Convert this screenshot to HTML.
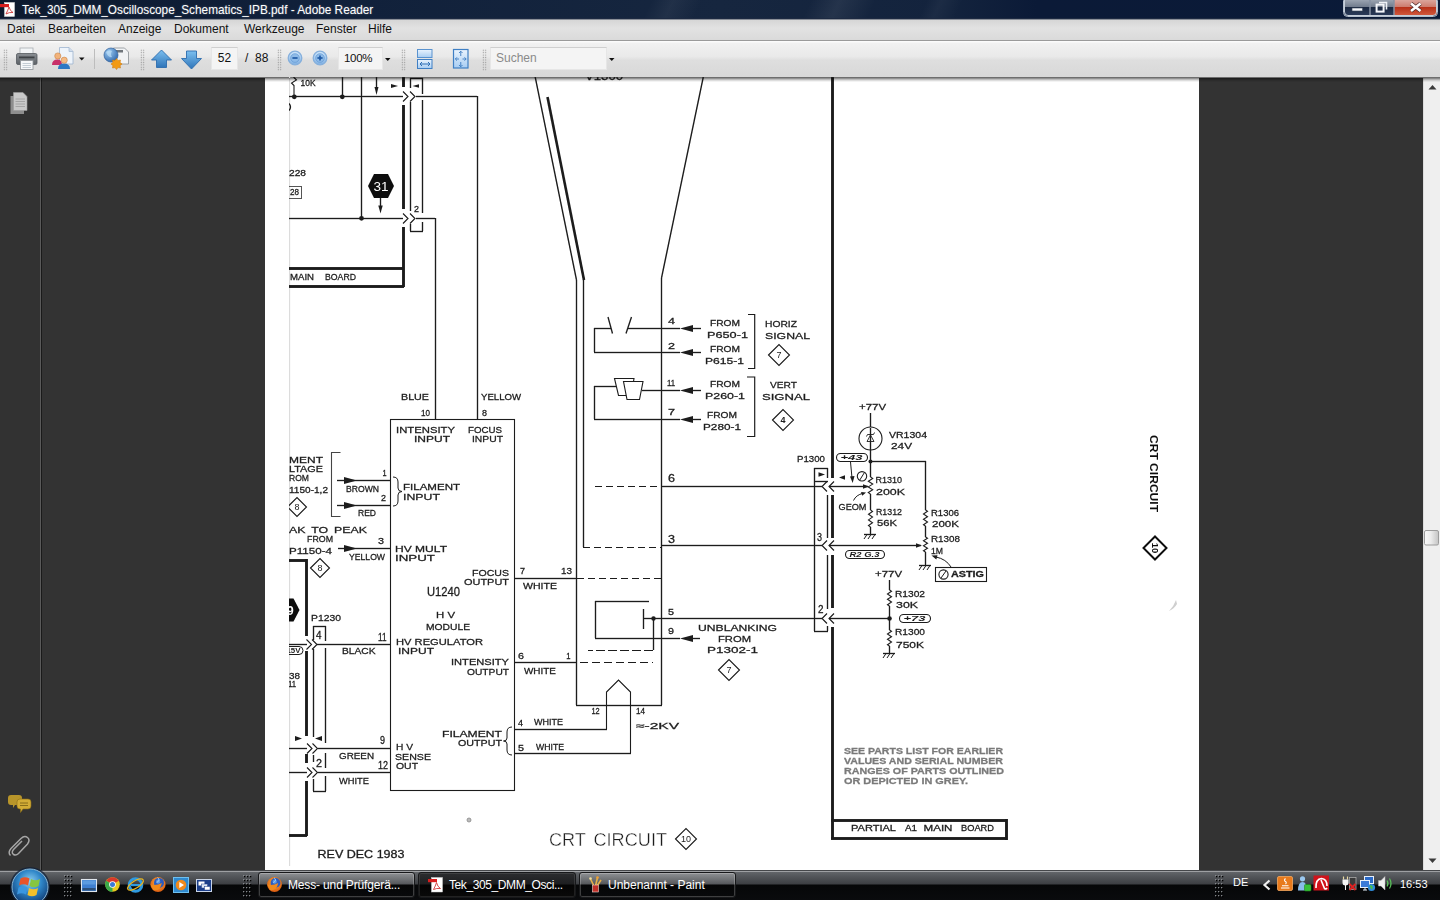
<!DOCTYPE html>
<html><head><meta charset="utf-8">
<style>
*{margin:0;padding:0;box-sizing:border-box}
html,body{width:1440px;height:900px;overflow:hidden;background:#333;font-family:"Liberation Sans",sans-serif}
.abs{position:absolute}
#title{left:0;top:0;width:1440px;height:19px;background:linear-gradient(115deg,transparent 45%,rgba(255,255,255,.05) 46.5%,transparent 48.5%,transparent 56%,rgba(255,255,255,.07) 58%,transparent 60.5%,transparent 64%,rgba(255,255,255,.04) 65%,transparent 66.5%),linear-gradient(90deg,#0d1a2e 0,#10203a 20%,#16263f 50%,#13233d 66%,#0b1a37 72%,#0a1a38 100%);border-bottom:1px solid #1d2a42}
#title .t{left:22px;top:1px;color:#fff;font-size:13px;line-height:17px;white-space:nowrap;transform-origin:0 0;transform:scaleX(0.907);text-shadow:0 0 2px rgba(255,255,255,.35)}
#menu{left:0;top:19px;width:1440px;height:22px;z-index:2;background:linear-gradient(#d6d6d6,#e2e2e2 40%,#dadada);border-top:1px solid #8a8f98;border-bottom:1px solid #9a9a9a}
#menu span{position:absolute;top:2px;font-size:12px;line-height:15px;color:#111;white-space:nowrap}
#tool{left:0;top:40px;width:1440px;height:38px;background:linear-gradient(#fbfbfb 0,#fbfbfb 2px,#f1f1f1 3px,#e9e9e9 45%,#dedede 55%,#d8d8d8);border-bottom:1px solid #6e6e6e}
#toolshadow{left:0;top:78px;width:1440px;height:4px;background:linear-gradient(rgba(0,0,0,.5),rgba(0,0,0,.18) 50%,rgba(0,0,0,0))}
.grip{width:5px;height:22px;top:9px;background-image:radial-gradient(circle,#8e8e8e 0.65px,transparent 0.85px);background-size:2.5px 2.45px}
.box{background:#f4f4f4;border:1px solid #e6e6e6;border-top-color:#cfcfcf;font-size:12px;line-height:21px;color:#111}
#side{left:0;top:78px;width:42px;height:792px;background:#323232;border-right:1px solid #1a1a1a;box-shadow:inset -1px 0 0 #5a5a5a}
#page{left:265px;top:78px;width:934px;height:792px;background:#fff}
#scroll{left:1423px;top:78px;width:17px;height:792px;background:#efefef;border-left:1px solid #dcdcdc}
#task{left:0;top:870px;width:1440px;height:30px;background:linear-gradient(#45474a 0,#45474a 1px,#9ea0a3 1px,#9ea0a3 2px,#626569 2px,#54575b 6px,#3d3f43 14px,#060708 15px,#0a0b0d 100%)}
.tb{top:2px;height:26px;border-radius:3px;border:1px solid #17181a;box-shadow:inset 0 0 0 1px rgba(255,255,255,.22);background:linear-gradient(rgba(255,255,255,.30),rgba(255,255,255,.13) 46%,rgba(0,0,0,.25) 50%,rgba(0,0,0,.05));color:#fff;font-size:12px;line-height:24px;white-space:nowrap;overflow:hidden}
.tb.act{background:linear-gradient(#2c2d2f,#1d1e20 46%,#040404 50%,#0a0a0a);box-shadow:inset 0 0 0 1px rgba(255,255,255,.10)}
svg{position:absolute;left:0;top:0;overflow:visible}
</style></head><body>
<!--TITLE-->
<div id="title" class="abs"><div class="t abs">Tek_305_DMM_Oscilloscope_Schematics_IPB.pdf - Adobe Reader</div></div>
<!--MENU-->
<div id="menu" class="abs">
<span style="left:7px">Datei</span><span style="left:48px">Bearbeiten</span><span style="left:118px">Anzeige</span><span style="left:174px">Dokument</span><span style="left:244px">Werkzeuge</span><span style="left:316px">Fenster</span><span style="left:368px">Hilfe</span>
</div>
<!--TOOL-->
<div id="tool" class="abs">
<div class="grip abs" style="left:3px"></div>
<div class="grip abs" style="left:140px"></div>
<div class="grip abs" style="left:277px"></div>
<div class="grip abs" style="left:401px"></div>
<div class="grip abs" style="left:482px"></div>
<div class="abs" style="left:94px;top:9px;width:1px;height:20px;background:#bdbdbd"></div>
<div class="box abs" style="left:211px;top:7px;width:27px;height:23px;text-align:center">52</div>
<div class="abs" style="left:245px;top:8px;font-size:12px;line-height:21px;color:#111;white-space:pre">/  88</div>
<div class="box abs" style="left:338px;top:7px;width:45px;height:23px;padding-left:5px;font-size:11.5px;letter-spacing:-0.3px">100%</div>
<div class="box abs" style="left:490px;top:7px;width:117px;height:23px;padding-left:5px;color:#8a8a8a">Suchen</div>
</div>
<!--SIDE-->
<div id="side" class="abs"></div>
<!--PAGE-->
<div id="page" class="abs"></div>
<div id="scroll" class="abs"></div>
<svg width="1440" height="900" viewBox="0 0 1440 900" font-family="Liberation Sans, sans-serif"><defs><filter id="soft" x="0" y="0" width="100%" height="100%" filterUnits="userSpaceOnUse"><feGaussianBlur stdDeviation="0.33"/></filter><clipPath id="pg"><rect x="289" y="77" width="910" height="790"/></clipPath></defs><g clip-path="url(#pg)" style="font-family:'Liberation Sans',sans-serif" opacity="0.999" filter="url(#soft)">
<rect x="288.84" y="77" width="1.32" height="789" fill="#dcdcdc"/>
<path d="M293.5 77 L296.5 80 L291.5 83 L294 85.5 L294 96" stroke="#1c1c1c" stroke-width="1.1" fill="none" stroke-linejoin="miter"/>
<text x="300.5" y="86.0" textLength="15.0" lengthAdjust="spacingAndGlyphs" font-size="9" fill="#1c1c1c" stroke="#1c1c1c" stroke-width="0.28">10K</text>
<circle cx="294.3" cy="96.8" r="2.4" fill="#1c1c1c"/>
<circle cx="342.3" cy="96.8" r="2.4" fill="#1c1c1c"/>
<rect x="341.84" y="77" width="1.32" height="20" fill="#1c1c1c"/>
<rect x="360.84" y="77" width="1.32" height="141" fill="#1c1c1c"/>
<circle cx="361.5" cy="218.3" r="2.4" fill="#1c1c1c"/>
<rect x="375.84" y="77" width="1.32" height="11" fill="#1c1c1c"/>
<path d="M376.5 95 L374.500 87 L378.500 87 Z" fill="#1c1c1c"/>
<rect x="289" y="95.84" width="114" height="1.32" fill="#1c1c1c"/>
<path d="M403 91.5 L408 96.5 L403 101.5" stroke="#1c1c1c" stroke-width="1.1" fill="none" stroke-linejoin="miter"/>
<path d="M410 91.5 L415 96.5 L410 101.5" stroke="#1c1c1c" stroke-width="1.1" fill="none" stroke-linejoin="miter"/>
<rect x="416" y="95.84" width="61" height="1.32" fill="#1c1c1c"/>
<rect x="476.84" y="96" width="1.32" height="323" fill="#1c1c1c"/>
<path d="M289 103.500 Q292 107 289 110.500" stroke="#1c1c1c" stroke-width="1.3" fill="none" stroke-linejoin="miter"/>
<rect x="402.05" y="77" width="2.90" height="10" fill="#1c1c1c"/>
<rect x="402.05" y="105" width="2.90" height="104" fill="#1c1c1c"/>
<rect x="402.05" y="227" width="2.90" height="60" fill="#1c1c1c"/>
<rect x="409.84" y="78" width="1.32" height="10" fill="#1c1c1c"/>
<rect x="409.84" y="102" width="1.32" height="109" fill="#1c1c1c"/>
<rect x="409.84" y="224" width="1.32" height="7" fill="#1c1c1c"/>
<rect x="421.84" y="78" width="1.32" height="16" fill="#1c1c1c"/>
<rect x="421.84" y="100" width="1.32" height="113" fill="#1c1c1c"/>
<rect x="421.84" y="222" width="1.32" height="9" fill="#1c1c1c"/>
<rect x="410" y="230.84" width="13" height="1.32" fill="#1c1c1c"/>
<rect x="410" y="77.84" width="13" height="1.32" fill="#1c1c1c"/>
<path d="M398 86 L391 84 L391 88 Z" fill="#1c1c1c"/>
<path d="M412.500 86 L419 84.200 L419 87.800 Z" fill="#1c1c1c"/>
<rect x="289" y="217.84" width="114" height="1.32" fill="#1c1c1c"/>
<path d="M403 213.5 L408 218.5 L403 223.5" stroke="#1c1c1c" stroke-width="1.1" fill="none" stroke-linejoin="miter"/>
<path d="M410 213.5 L415 218.5 L410 223.5" stroke="#1c1c1c" stroke-width="1.1" fill="none" stroke-linejoin="miter"/>
<rect x="416" y="217.84" width="19" height="1.32" fill="#1c1c1c"/>
<rect x="434.84" y="218" width="1.32" height="201" fill="#1c1c1c"/>
<text x="414.0" y="212.3" textLength="5.0" lengthAdjust="spacingAndGlyphs" font-size="9" fill="#1c1c1c" stroke="#1c1c1c" stroke-width="0.28">2</text>
<path d="M368 186 L374 174 L388 174 L394 186 L388 198 L374 198 Z" fill="#0a0a0a"/>
<text x="381" y="190.8" text-anchor="middle" font-size="13.5" fill="#fff">31</text>
<rect x="379.84" y="198" width="1.32" height="9" fill="#1c1c1c"/>
<path d="M380.5 213.5 L378.300 205.5 L382.700 205.5 Z" fill="#1c1c1c"/>
<text x="289.0" y="176.3" textLength="17.0" lengthAdjust="spacingAndGlyphs" font-size="9" fill="#1c1c1c" stroke="#1c1c1c" stroke-width="0.28">228</text>
<rect x="285.5" y="186.5" width="16" height="12" fill="none" stroke="#555" stroke-width="1"/>
<text x="290.0" y="194.8" textLength="9.0" lengthAdjust="spacingAndGlyphs" font-size="9" fill="#1c1c1c" stroke="#1c1c1c" stroke-width="0.28">28</text>
<rect x="289" y="267.05" width="115" height="2.90" fill="#1c1c1c"/>
<rect x="289" y="285.05" width="115" height="2.90" fill="#1c1c1c"/>
<text x="290.0" y="279.5" textLength="24.0" lengthAdjust="spacingAndGlyphs" font-size="9.5" fill="#1c1c1c" stroke="#1c1c1c" stroke-width="0.28">MAIN</text>
<text x="325.0" y="279.5" textLength="31.0" lengthAdjust="spacingAndGlyphs" font-size="9.5" fill="#1c1c1c" stroke="#1c1c1c" stroke-width="0.28">BOARD</text>
<line x1="535" y1="76" x2="576.5" y2="280" stroke="#1c1c1c" stroke-width="1.35"/>
<rect x="575.84" y="280" width="1.32" height="425" fill="#1c1c1c"/>
<line x1="547.5" y1="97" x2="584" y2="280" stroke="#1c1c1c" stroke-width="2.6"/>
<rect x="582.84" y="279" width="1.32" height="268" fill="#1c1c1c"/>
<line x1="703.5" y1="76" x2="661.5" y2="278" stroke="#1c1c1c" stroke-width="1.35"/>
<rect x="660.84" y="278" width="1.32" height="427" fill="#1c1c1c"/>
<rect x="576" y="704.84" width="86" height="1.32" fill="#1c1c1c"/>
<text x="585.0" y="79.6" textLength="38.0" lengthAdjust="spacingAndGlyphs" font-size="11" fill="#1c1c1c" stroke="#1c1c1c" stroke-width="0.28">V1300</text>
<rect x="594" y="327.84" width="17" height="1.32" fill="#1c1c1c"/>
<rect x="628" y="327.84" width="52" height="1.32" fill="#1c1c1c"/>
<line x1="608" y1="317" x2="612.5" y2="333.5" stroke="#1c1c1c" stroke-width="1.35"/>
<line x1="631.5" y1="317" x2="626" y2="333.5" stroke="#1c1c1c" stroke-width="1.35"/>
<rect x="593.84" y="328" width="1.32" height="24" fill="#1c1c1c"/>
<rect x="594" y="351.84" width="86" height="1.32" fill="#1c1c1c"/>
<path d="M680 328.5 L693 325.0 L693 332.0 Z" fill="#1c1c1c"/>
<rect x="693" y="327.84" width="8" height="1.32" fill="#1c1c1c"/>
<path d="M680 352.5 L693 349.0 L693 356.0 Z" fill="#1c1c1c"/>
<rect x="693" y="351.84" width="8" height="1.32" fill="#1c1c1c"/>
<text x="668.0" y="324.0" textLength="7.0" lengthAdjust="spacingAndGlyphs" font-size="9.5" fill="#1c1c1c" stroke="#1c1c1c" stroke-width="0.28">4</text>
<text x="668.0" y="348.5" textLength="7.0" lengthAdjust="spacingAndGlyphs" font-size="9.5" fill="#1c1c1c" stroke="#1c1c1c" stroke-width="0.28">2</text>
<text x="710.0" y="325.6" textLength="30.0" lengthAdjust="spacingAndGlyphs" font-size="9.7" fill="#1c1c1c" stroke="#1c1c1c" stroke-width="0.28">FROM</text>
<text x="707.0" y="337.6" textLength="41.0" lengthAdjust="spacingAndGlyphs" font-size="9.7" fill="#1c1c1c" stroke="#1c1c1c" stroke-width="0.28">P650-1</text>
<text x="710.0" y="352.1" textLength="30.0" lengthAdjust="spacingAndGlyphs" font-size="9.7" fill="#1c1c1c" stroke="#1c1c1c" stroke-width="0.28">FROM</text>
<text x="705.0" y="363.6" textLength="39.0" lengthAdjust="spacingAndGlyphs" font-size="9.7" fill="#1c1c1c" stroke="#1c1c1c" stroke-width="0.28">P615-1</text>
<path d="M748 314.5 L754.7 314.5 L754.7 368.5 L748 368.5" stroke="#1c1c1c" stroke-width="1.2" fill="none" stroke-linejoin="miter"/>
<text x="765.0" y="326.6" textLength="32.0" lengthAdjust="spacingAndGlyphs" font-size="9.7" fill="#1c1c1c" stroke="#1c1c1c" stroke-width="0.28">HORIZ</text>
<text x="765.0" y="338.6" textLength="45.0" lengthAdjust="spacingAndGlyphs" font-size="9.7" fill="#1c1c1c" stroke="#1c1c1c" stroke-width="0.28">SIGNAL</text>
<path d="M768.5 355 L779 344.5 L789.5 355 L779 365.5 Z" fill="none" stroke="#1c1c1c" stroke-width="1.1"/>
<text x="779" y="358.2" text-anchor="middle" font-size="9" fill="#1c1c1c">7</text>
<rect x="594" y="385.84" width="22" height="1.32" fill="#1c1c1c"/>
<rect x="593.84" y="386" width="1.32" height="33" fill="#1c1c1c"/>
<rect x="594" y="418.84" width="86" height="1.32" fill="#1c1c1c"/>
<path d="M614.5 378.5 L634 378.5 L631 395.5 L618.5 395.5 Z" stroke="#1c1c1c" stroke-width="1.1" fill="#fff" stroke-linejoin="miter"/>
<path d="M623.5 381.5 L643 381.5 L639.5 399.5 L627 399.5 Z" stroke="#1c1c1c" stroke-width="1.1" fill="#fff" stroke-linejoin="miter"/>
<rect x="642" y="389.84" width="38" height="1.32" fill="#1c1c1c"/>
<path d="M680 390.5 L693 387.0 L693 394.0 Z" fill="#1c1c1c"/>
<rect x="693" y="389.84" width="8" height="1.32" fill="#1c1c1c"/>
<path d="M680 419.5 L693 416.0 L693 423.0 Z" fill="#1c1c1c"/>
<rect x="693" y="418.84" width="8" height="1.32" fill="#1c1c1c"/>
<text x="667.0" y="385.5" textLength="8.1" lengthAdjust="spacingAndGlyphs" font-size="9.5" fill="#1c1c1c" stroke="#1c1c1c" stroke-width="0.28">11</text>
<text x="668.0" y="414.5" textLength="7.0" lengthAdjust="spacingAndGlyphs" font-size="9.5" fill="#1c1c1c" stroke="#1c1c1c" stroke-width="0.28">7</text>
<text x="710.0" y="386.6" textLength="30.0" lengthAdjust="spacingAndGlyphs" font-size="9.7" fill="#1c1c1c" stroke="#1c1c1c" stroke-width="0.28">FROM</text>
<text x="705.0" y="398.6" textLength="40.0" lengthAdjust="spacingAndGlyphs" font-size="9.7" fill="#1c1c1c" stroke="#1c1c1c" stroke-width="0.28">P260-1</text>
<text x="707.0" y="417.6" textLength="30.0" lengthAdjust="spacingAndGlyphs" font-size="9.7" fill="#1c1c1c" stroke="#1c1c1c" stroke-width="0.28">FROM</text>
<text x="703.0" y="429.6" textLength="38.0" lengthAdjust="spacingAndGlyphs" font-size="9.7" fill="#1c1c1c" stroke="#1c1c1c" stroke-width="0.28">P280-1</text>
<path d="M747 377 L754.7 377 L754.7 436.5 L747 436.5" stroke="#1c1c1c" stroke-width="1.2" fill="none" stroke-linejoin="miter"/>
<text x="770.0" y="387.6" textLength="27.0" lengthAdjust="spacingAndGlyphs" font-size="9.7" fill="#1c1c1c" stroke="#1c1c1c" stroke-width="0.28">VERT</text>
<text x="762.0" y="399.6" textLength="48.0" lengthAdjust="spacingAndGlyphs" font-size="9.7" fill="#1c1c1c" stroke="#1c1c1c" stroke-width="0.28">SIGNAL</text>
<path d="M772.5 420 L783 409.5 L793.5 420 L783 430.5 Z" fill="none" stroke="#1c1c1c" stroke-width="1.1"/>
<text x="783" y="423.2" text-anchor="middle" font-size="9" fill="#1c1c1c" font-weight="bold">4</text>
<rect x="831.05" y="77" width="2.90" height="401" fill="#1c1c1c"/>
<rect x="831.05" y="495" width="2.90" height="43" fill="#1c1c1c"/>
<rect x="831.05" y="555" width="2.90" height="53" fill="#1c1c1c"/>
<rect x="831.05" y="627" width="2.90" height="211" fill="#1c1c1c"/>
<rect x="831" y="819.05" width="176" height="2.90" fill="#1c1c1c"/>
<rect x="831" y="837.05" width="176" height="2.90" fill="#1c1c1c"/>
<rect x="1005.05" y="819" width="2.90" height="21" fill="#1c1c1c"/>
<text x="851.0" y="831.3" textLength="45.0" lengthAdjust="spacingAndGlyphs" font-size="9" fill="#1c1c1c" stroke="#1c1c1c" stroke-width="0.28">PARTIAL</text>
<text x="905.0" y="831.3" textLength="12.0" lengthAdjust="spacingAndGlyphs" font-size="9" fill="#1c1c1c" stroke="#1c1c1c" stroke-width="0.28">A1</text>
<text x="923.5" y="831.3" textLength="29.0" lengthAdjust="spacingAndGlyphs" font-size="9" fill="#1c1c1c" stroke="#1c1c1c" stroke-width="0.28">MAIN</text>
<text x="961.0" y="831.3" textLength="33.0" lengthAdjust="spacingAndGlyphs" font-size="9" fill="#1c1c1c" stroke="#1c1c1c" stroke-width="0.28">BOARD</text>
<rect x="813.84" y="468" width="1.32" height="163" fill="#1c1c1c"/>
<rect x="826.84" y="468" width="1.32" height="10" fill="#1c1c1c"/>
<rect x="826.84" y="495" width="1.32" height="43" fill="#1c1c1c"/>
<rect x="826.84" y="555" width="1.32" height="54" fill="#1c1c1c"/>
<rect x="826.84" y="626" width="1.32" height="5" fill="#1c1c1c"/>
<rect x="814" y="467.84" width="14" height="1.32" fill="#1c1c1c"/>
<rect x="814" y="480.84" width="14" height="1.32" fill="#1c1c1c"/>
<rect x="814" y="630.84" width="14" height="1.32" fill="#1c1c1c"/>
<path d="M825 474.5 L818.5 472.3 L818.5 476.7 Z" fill="#1c1c1c"/>
<text x="797.0" y="461.5" textLength="28.0" lengthAdjust="spacingAndGlyphs" font-size="9.5" fill="#1c1c1c" stroke="#1c1c1c" stroke-width="0.28">P1300</text>
<line x1="595" y1="486.5" x2="661" y2="486.5" stroke="#1c1c1c" stroke-width="1" stroke-dasharray="7 4"/>
<rect x="661" y="485.84" width="161" height="1.32" fill="#1c1c1c"/>
<path d="M834 481.5 L829 486.5 L834 491.5" stroke="#1c1c1c" stroke-width="1.1" fill="none" stroke-linejoin="miter"/>
<path d="M827 481.5 L822 486.5 L827 491.5" stroke="#1c1c1c" stroke-width="1.1" fill="none" stroke-linejoin="miter"/>
<rect x="829" y="485.84" width="39" height="1.32" fill="#1c1c1c"/>
<path d="M869 486.5 L863 484.3 L863 488.7 Z" fill="#1c1c1c"/>
<text x="668.0" y="482.4" textLength="7.0" lengthAdjust="spacingAndGlyphs" font-size="10.5" fill="#1c1c1c" stroke="#1c1c1c" stroke-width="0.28">6</text>
<line x1="583" y1="547.5" x2="661" y2="547.5" stroke="#1c1c1c" stroke-width="1" stroke-dasharray="7 4"/>
<rect x="661" y="544.84" width="161" height="1.32" fill="#1c1c1c"/>
<path d="M834 540.5 L829 545.5 L834 550.5" stroke="#1c1c1c" stroke-width="1.1" fill="none" stroke-linejoin="miter"/>
<path d="M827 540.5 L822 545.5 L827 550.5" stroke="#1c1c1c" stroke-width="1.1" fill="none" stroke-linejoin="miter"/>
<rect x="829" y="544.84" width="92" height="1.32" fill="#1c1c1c"/>
<path d="M922 545.5 L916 543.3 L916 547.7 Z" fill="#1c1c1c"/>
<text x="668.0" y="542.9" textLength="7.0" lengthAdjust="spacingAndGlyphs" font-size="10.5" fill="#1c1c1c" stroke="#1c1c1c" stroke-width="0.28">3</text>
<text x="817.0" y="541.4" textLength="5.0" lengthAdjust="spacingAndGlyphs" font-size="10.5" fill="#1c1c1c" stroke="#1c1c1c" stroke-width="0.28">3</text>
<rect x="643" y="617.84" width="179" height="1.32" fill="#1c1c1c"/>
<path d="M834 613.5 L829 618.5 L834 623.5" stroke="#1c1c1c" stroke-width="1.1" fill="none" stroke-linejoin="miter"/>
<path d="M827 613.5 L822 618.5 L827 623.5" stroke="#1c1c1c" stroke-width="1.1" fill="none" stroke-linejoin="miter"/>
<rect x="829" y="617.84" width="60" height="1.32" fill="#1c1c1c"/>
<text x="818.0" y="612.6" textLength="5.5" lengthAdjust="spacingAndGlyphs" font-size="11" fill="#1c1c1c" stroke="#1c1c1c" stroke-width="0.28">2</text>
<text x="859.0" y="409.5" textLength="27.0" lengthAdjust="spacingAndGlyphs" font-size="9.5" fill="#1c1c1c" stroke="#1c1c1c" stroke-width="0.28">+77V</text>
<rect x="869.84" y="413" width="1.32" height="14" fill="#1c1c1c"/>
<circle cx="870.5" cy="438.5" r="11.5" fill="none" stroke="#1c1c1c" stroke-width="1.1"/>
<rect x="869.84" y="428" width="1.32" height="33" fill="#1c1c1c"/>
<path d="M867 441.5 L874 441.5 L870.5 435 Z M866.5 436.5 L867.5 434.5 L873.5 434.5 L874.5 432.5" stroke="#1c1c1c" stroke-width="0.9" fill="none" stroke-linejoin="miter"/>
<circle cx="870.5" cy="461.5" r="2" fill="#1c1c1c"/>
<text x="889.0" y="437.5" textLength="38.0" lengthAdjust="spacingAndGlyphs" font-size="9.5" fill="#1c1c1c" stroke="#1c1c1c" stroke-width="0.28">VR1304</text>
<text x="891.0" y="449.0" textLength="21.0" lengthAdjust="spacingAndGlyphs" font-size="9.5" fill="#1c1c1c" stroke="#1c1c1c" stroke-width="0.28">24V</text>
<rect x="870" y="460.84" width="56" height="1.32" fill="#1c1c1c"/>
<rect x="924.84" y="461" width="1.32" height="49" fill="#1c1c1c"/>
<path d="M925.5 510 L927.5 511.3 L923.5 514.0 L927.5 516.7 L923.5 519.3 L927.5 522.0 L923.5 524.7 L925.5 526" stroke="#1c1c1c" stroke-width="1.1" fill="none" stroke-linejoin="miter"/>
<rect x="924.84" y="526" width="1.32" height="11" fill="#1c1c1c"/>
<path d="M925.5 537 L927.5 538.2 L923.5 540.8 L927.5 543.2 L923.5 545.8 L927.5 548.2 L923.5 550.8 L925.5 552" stroke="#1c1c1c" stroke-width="1.1" fill="none" stroke-linejoin="miter"/>
<rect x="924.84" y="552" width="1.32" height="13" fill="#1c1c1c"/>
<rect x="919" y="564.84" width="12" height="1.32" fill="#1c1c1c"/>
<line x1="922" y1="565.5" x2="919" y2="570" stroke="#1c1c1c" stroke-width="1"/>
<line x1="926" y1="565.5" x2="923" y2="570" stroke="#1c1c1c" stroke-width="1"/>
<line x1="930" y1="565.5" x2="927" y2="570" stroke="#1c1c1c" stroke-width="1"/>
<rect x="836.5" y="453.5" width="31" height="8" rx="4.0" fill="none" stroke="#1c1c1c" stroke-width="1.1"/>
<text x="851.5" y="460.2" text-anchor="middle" font-size="7.5" font-style="italic" font-weight="bold" fill="#1c1c1c" textLength="22" lengthAdjust="spacingAndGlyphs">+43</text>
<path d="M839 477.5 L845 475.2 L845 479.8 Z" fill="#1c1c1c"/>
<path d="M850.5 462 L852 478" stroke="#1c1c1c" stroke-width="1" fill="none" stroke-linejoin="miter"/>
<path d="M852.7 483 L850 476.5 L854.5 476 Z" fill="#1c1c1c"/>
<circle cx="862" cy="476.3" r="4.7" fill="none" stroke="#1c1c1c" stroke-width="1.1"/>
<line x1="859.8" y1="480" x2="864.4" y2="472.6" stroke="#1c1c1c" stroke-width="1"/>
<rect x="869.84" y="461" width="1.32" height="16" fill="#1c1c1c"/>
<path d="M870.5 477 L872.7 478.4 L868.3 481.2 L872.7 484.1 L868.3 486.9 L872.7 489.8 L868.3 492.6 L870.5 494" stroke="#1c1c1c" stroke-width="1.1" fill="none" stroke-linejoin="miter"/>
<rect x="869.84" y="494" width="1.32" height="16" fill="#1c1c1c"/>
<path d="M870.5 510 L872.5 511.4 L868.5 514.2 L872.5 517.1 L868.5 519.9 L872.5 522.8 L868.5 525.6 L870.5 527" stroke="#1c1c1c" stroke-width="1.1" fill="none" stroke-linejoin="miter"/>
<rect x="869.84" y="527" width="1.32" height="7" fill="#1c1c1c"/>
<rect x="864" y="533.84" width="12" height="1.32" fill="#1c1c1c"/>
<line x1="867" y1="534.5" x2="864" y2="539" stroke="#1c1c1c" stroke-width="1"/>
<line x1="871" y1="534.5" x2="868" y2="539" stroke="#1c1c1c" stroke-width="1"/>
<line x1="875" y1="534.5" x2="872" y2="539" stroke="#1c1c1c" stroke-width="1"/>
<text x="875.5" y="483.0" textLength="26.5" lengthAdjust="spacingAndGlyphs" font-size="9.5" fill="#1c1c1c" stroke="#1c1c1c" stroke-width="0.28">R1310</text>
<text x="876.0" y="494.5" textLength="29.0" lengthAdjust="spacingAndGlyphs" font-size="9.5" fill="#1c1c1c" stroke="#1c1c1c" stroke-width="0.28">200K</text>
<text x="838.5" y="510.0" textLength="28.0" lengthAdjust="spacingAndGlyphs" font-size="9.5" fill="#1c1c1c" stroke="#1c1c1c" stroke-width="0.28">GEOM</text>
<path d="M853.5 500.5 Q856 495 863 493.3" stroke="#1c1c1c" stroke-width="1" fill="none" stroke-linejoin="miter"/>
<path d="M866 492.500 L861 492 L862.300 495.800 Z" fill="#1c1c1c"/>
<text x="876.0" y="514.5" textLength="26.0" lengthAdjust="spacingAndGlyphs" font-size="9.5" fill="#1c1c1c" stroke="#1c1c1c" stroke-width="0.28">R1312</text>
<text x="877.0" y="526.0" textLength="20.0" lengthAdjust="spacingAndGlyphs" font-size="9.5" fill="#1c1c1c" stroke="#1c1c1c" stroke-width="0.28">56K</text>
<text x="931.0" y="515.5" textLength="28.0" lengthAdjust="spacingAndGlyphs" font-size="9.5" fill="#1c1c1c" stroke="#1c1c1c" stroke-width="0.28">R1306</text>
<text x="932.0" y="527.0" textLength="27.0" lengthAdjust="spacingAndGlyphs" font-size="9.5" fill="#1c1c1c" stroke="#1c1c1c" stroke-width="0.28">200K</text>
<text x="931.0" y="542.0" textLength="29.0" lengthAdjust="spacingAndGlyphs" font-size="9.5" fill="#1c1c1c" stroke="#1c1c1c" stroke-width="0.28">R1308</text>
<text x="931.0" y="553.5" textLength="12.0" lengthAdjust="spacingAndGlyphs" font-size="9.5" fill="#1c1c1c" stroke="#1c1c1c" stroke-width="0.28">1M</text>
<rect x="845.5" y="550.5" width="39" height="8" rx="4.0" fill="none" stroke="#1c1c1c" stroke-width="1.1"/>
<text x="864.5" y="557.0" text-anchor="middle" font-size="7" font-style="italic" font-weight="bold" fill="#1c1c1c" textLength="30" lengthAdjust="spacingAndGlyphs">R2 G.3</text>
<rect x="935.5" y="567.5" width="51" height="14" fill="#fff" stroke="#1c1c1c" stroke-width="1.1"/>
<circle cx="943.5" cy="574.5" r="4.6" fill="none" stroke="#1c1c1c" stroke-width="1.1"/>
<line x1="941" y1="578" x2="946" y2="571" stroke="#1c1c1c" stroke-width="1"/>
<text x="951.0" y="577.0" textLength="33.0" lengthAdjust="spacingAndGlyphs" font-size="9.5" fill="#1c1c1c" stroke="#1c1c1c" stroke-width="0.28" font-weight="bold">ASTIG</text>
<path d="M951 567 Q946 559 936 557" stroke="#1c1c1c" stroke-width="1" fill="none" stroke-linejoin="miter"/>
<path d="M931.500 555.500 L937.500 555.200 L936.300 559.500 Z" fill="#1c1c1c"/>
<text x="875.0" y="576.5" textLength="27.0" lengthAdjust="spacingAndGlyphs" font-size="9.5" fill="#1c1c1c" stroke="#1c1c1c" stroke-width="0.28">+77V</text>
<rect x="888.84" y="580" width="1.32" height="10" fill="#1c1c1c"/>
<path d="M889.5 590 L891.5 591.3 L887.5 594.0 L891.5 596.7 L887.5 599.3 L891.5 602.0 L887.5 604.7 L889.5 606" stroke="#1c1c1c" stroke-width="1.1" fill="none" stroke-linejoin="miter"/>
<rect x="888.84" y="606" width="1.32" height="24" fill="#1c1c1c"/>
<circle cx="889.5" cy="618.5" r="2.3" fill="#1c1c1c"/>
<path d="M889.5 630 L891.5 631.3 L887.5 634.0 L891.5 636.7 L887.5 639.3 L891.5 642.0 L887.5 644.7 L889.5 646" stroke="#1c1c1c" stroke-width="1.1" fill="none" stroke-linejoin="miter"/>
<rect x="888.84" y="646" width="1.32" height="7" fill="#1c1c1c"/>
<rect x="883" y="652.84" width="12" height="1.32" fill="#1c1c1c"/>
<line x1="886" y1="653.5" x2="883" y2="658" stroke="#1c1c1c" stroke-width="1"/>
<line x1="890" y1="653.5" x2="887" y2="658" stroke="#1c1c1c" stroke-width="1"/>
<line x1="894" y1="653.5" x2="891" y2="658" stroke="#1c1c1c" stroke-width="1"/>
<text x="895.0" y="596.5" textLength="30.0" lengthAdjust="spacingAndGlyphs" font-size="9.5" fill="#1c1c1c" stroke="#1c1c1c" stroke-width="0.28">R1302</text>
<text x="896.0" y="608.0" textLength="22.0" lengthAdjust="spacingAndGlyphs" font-size="9.5" fill="#1c1c1c" stroke="#1c1c1c" stroke-width="0.28">30K</text>
<text x="895.0" y="635.0" textLength="30.0" lengthAdjust="spacingAndGlyphs" font-size="9.5" fill="#1c1c1c" stroke="#1c1c1c" stroke-width="0.28">R1300</text>
<text x="896.0" y="647.5" textLength="28.0" lengthAdjust="spacingAndGlyphs" font-size="9.5" fill="#1c1c1c" stroke="#1c1c1c" stroke-width="0.28">750K</text>
<rect x="899.5" y="614.5" width="31" height="8" rx="4.0" fill="none" stroke="#1c1c1c" stroke-width="1.1"/>
<text x="914.5" y="621.2" text-anchor="middle" font-size="7.5" font-style="italic" font-weight="bold" fill="#1c1c1c" textLength="22" lengthAdjust="spacingAndGlyphs">+73</text>
<rect x="514" y="577.84" width="62" height="1.32" fill="#1c1c1c"/>
<line x1="577" y1="578.5" x2="661" y2="578.5" stroke="#1c1c1c" stroke-width="1" stroke-dasharray="7 4"/>
<text x="520.0" y="573.5" textLength="5.0" lengthAdjust="spacingAndGlyphs" font-size="9.5" fill="#1c1c1c" stroke="#1c1c1c" stroke-width="0.28">7</text>
<text x="561.0" y="573.5" textLength="11.0" lengthAdjust="spacingAndGlyphs" font-size="9.5" fill="#1c1c1c" stroke="#1c1c1c" stroke-width="0.28">13</text>
<text x="523.0" y="588.5" textLength="34.0" lengthAdjust="spacingAndGlyphs" font-size="9.5" fill="#1c1c1c" stroke="#1c1c1c" stroke-width="0.28">WHITE</text>
<rect x="595" y="600.84" width="54" height="1.32" fill="#1c1c1c"/>
<rect x="594.84" y="601" width="1.32" height="37" fill="#1c1c1c"/>
<rect x="595" y="637.84" width="85" height="1.32" fill="#1c1c1c"/>
<path d="M680 638.5 L693 635.0 L693 642.0 Z" fill="#1c1c1c"/>
<rect x="693" y="637.84" width="7" height="1.32" fill="#1c1c1c"/>
<rect x="642.84" y="609" width="1.32" height="20" fill="#1c1c1c"/>
<circle cx="653.5" cy="618.5" r="2.2" fill="#1c1c1c"/>
<rect x="652.84" y="618" width="1.32" height="32" fill="#1c1c1c"/>
<line x1="653" y1="650.5" x2="588" y2="650.5" stroke="#1c1c1c" stroke-width="1.2" stroke-dasharray="9 3"/>
<text x="668.0" y="614.5" textLength="6.0" lengthAdjust="spacingAndGlyphs" font-size="9.5" fill="#1c1c1c" stroke="#1c1c1c" stroke-width="0.28">5</text>
<text x="668.0" y="633.5" textLength="6.0" lengthAdjust="spacingAndGlyphs" font-size="9.5" fill="#1c1c1c" stroke="#1c1c1c" stroke-width="0.28">9</text>
<rect x="514" y="661.84" width="62" height="1.32" fill="#1c1c1c"/>
<line x1="580" y1="662.5" x2="653" y2="662.5" stroke="#1c1c1c" stroke-width="1" stroke-dasharray="8 4"/>
<text x="518.0" y="659.0" textLength="6.0" lengthAdjust="spacingAndGlyphs" font-size="9.5" fill="#1c1c1c" stroke="#1c1c1c" stroke-width="0.28">6</text>
<text x="566.3" y="658.5" textLength="4.3" lengthAdjust="spacingAndGlyphs" font-size="9.5" fill="#1c1c1c" stroke="#1c1c1c" stroke-width="0.28">1</text>
<text x="524.0" y="673.5" textLength="32.0" lengthAdjust="spacingAndGlyphs" font-size="9.5" fill="#1c1c1c" stroke="#1c1c1c" stroke-width="0.28">WHITE</text>
<path d="M606.5 729.5 L606.5 692 L618.5 680 L630.5 692 L630.5 753.5" stroke="#1c1c1c" stroke-width="1.1" fill="none" stroke-linejoin="miter"/>
<rect x="514" y="728.84" width="93" height="1.32" fill="#1c1c1c"/>
<rect x="514" y="752.84" width="117" height="1.32" fill="#1c1c1c"/>
<text x="591.4" y="714.3" textLength="8.2" lengthAdjust="spacingAndGlyphs" font-size="9" fill="#1c1c1c" stroke="#1c1c1c" stroke-width="0.28">12</text>
<text x="636.0" y="714.3" textLength="9.0" lengthAdjust="spacingAndGlyphs" font-size="9" fill="#1c1c1c" stroke="#1c1c1c" stroke-width="0.28">14</text>
<text x="636.0" y="728.5" textLength="43.0" lengthAdjust="spacingAndGlyphs" font-size="9.5" fill="#1c1c1c" stroke="#1c1c1c" stroke-width="0.28">≈-2KV</text>
<text x="518.0" y="725.5" textLength="5.0" lengthAdjust="spacingAndGlyphs" font-size="9.5" fill="#1c1c1c" stroke="#1c1c1c" stroke-width="0.28">4</text>
<text x="534.0" y="725.3" textLength="29.0" lengthAdjust="spacingAndGlyphs" font-size="9" fill="#1c1c1c" stroke="#1c1c1c" stroke-width="0.28">WHITE</text>
<text x="518.0" y="750.5" textLength="6.0" lengthAdjust="spacingAndGlyphs" font-size="9.5" fill="#1c1c1c" stroke="#1c1c1c" stroke-width="0.28">5</text>
<text x="536.0" y="750.3" textLength="28.0" lengthAdjust="spacingAndGlyphs" font-size="9" fill="#1c1c1c" stroke="#1c1c1c" stroke-width="0.28">WHITE</text>
<text x="698.0" y="630.6" textLength="79.0" lengthAdjust="spacingAndGlyphs" font-size="9.7" fill="#1c1c1c" stroke="#1c1c1c" stroke-width="0.28">UNBLANKING</text>
<text x="718.0" y="641.6" textLength="33.0" lengthAdjust="spacingAndGlyphs" font-size="9.7" fill="#1c1c1c" stroke="#1c1c1c" stroke-width="0.28">FROM</text>
<text x="707.0" y="653.1" textLength="51.0" lengthAdjust="spacingAndGlyphs" font-size="9.7" fill="#1c1c1c" stroke="#1c1c1c" stroke-width="0.28">P1302-1</text>
<path d="M718.5 670 L729 659.5 L739.5 670 L729 680.5 Z" fill="none" stroke="#1c1c1c" stroke-width="1.1"/>
<text x="729" y="673.2" text-anchor="middle" font-size="9" fill="#1c1c1c">7</text>
<rect x="390.5" y="419.5" width="124" height="371" fill="none" stroke="#1c1c1c" stroke-width="1.1"/>
<text x="401.0" y="400.3" textLength="28.0" lengthAdjust="spacingAndGlyphs" font-size="9" fill="#1c1c1c" stroke="#1c1c1c" stroke-width="0.28">BLUE</text>
<text x="421.0" y="416.3" textLength="9.0" lengthAdjust="spacingAndGlyphs" font-size="9" fill="#1c1c1c" stroke="#1c1c1c" stroke-width="0.28">10</text>
<text x="481.0" y="400.3" textLength="40.0" lengthAdjust="spacingAndGlyphs" font-size="9" fill="#1c1c1c" stroke="#1c1c1c" stroke-width="0.28">YELLOW</text>
<text x="482.0" y="416.3" textLength="5.0" lengthAdjust="spacingAndGlyphs" font-size="9" fill="#1c1c1c" stroke="#1c1c1c" stroke-width="0.28">8</text>
<text x="396.0" y="432.6" textLength="59.0" lengthAdjust="spacingAndGlyphs" font-size="9.7" fill="#1c1c1c" stroke="#1c1c1c" stroke-width="0.28">INTENSITY</text>
<text x="414.0" y="442.1" textLength="36.0" lengthAdjust="spacingAndGlyphs" font-size="9.7" fill="#1c1c1c" stroke="#1c1c1c" stroke-width="0.28">INPUT</text>
<text x="468.0" y="432.6" textLength="34.0" lengthAdjust="spacingAndGlyphs" font-size="9.7" fill="#1c1c1c" stroke="#1c1c1c" stroke-width="0.28">FOCUS</text>
<text x="472.0" y="442.1" textLength="31.0" lengthAdjust="spacingAndGlyphs" font-size="9.7" fill="#1c1c1c" stroke="#1c1c1c" stroke-width="0.28">INPUT</text>
<path d="M340.5 452.5 L331.5 452.5 L331.5 516.5 L340.5 516.5" stroke="#444" stroke-width="1.1" fill="none" stroke-linejoin="miter"/>
<text x="289.0" y="462.6" textLength="34.0" lengthAdjust="spacingAndGlyphs" font-size="9.7" fill="#1c1c1c" stroke="#1c1c1c" stroke-width="0.28">MENT</text>
<text x="289.0" y="472.1" textLength="34.0" lengthAdjust="spacingAndGlyphs" font-size="9.7" fill="#1c1c1c" stroke="#1c1c1c" stroke-width="0.28">LTAGE</text>
<text x="289.0" y="481.1" textLength="20.0" lengthAdjust="spacingAndGlyphs" font-size="9.7" fill="#1c1c1c" stroke="#1c1c1c" stroke-width="0.28">ROM</text>
<text x="289.0" y="493.3" textLength="39.0" lengthAdjust="spacingAndGlyphs" font-size="9" fill="#1c1c1c" stroke="#1c1c1c" stroke-width="0.28">1150-1,2</text>
<path d="M287.5 507 L297 497.5 L306.5 507 L297 516.5 Z" fill="none" stroke="#1c1c1c" stroke-width="1.1"/>
<text x="297" y="510.2" text-anchor="middle" font-size="9" fill="#1c1c1c">8</text>
<rect x="337" y="479.84" width="54" height="1.32" fill="#1c1c1c"/>
<path d="M357 480.5 L344 477.0 L344 484.0 Z" fill="#1c1c1c"/>
<rect x="337" y="504.84" width="54" height="1.32" fill="#1c1c1c"/>
<path d="M357 505.5 L344 502.0 L344 509.0 Z" fill="#1c1c1c"/>
<text x="382.4" y="476.3" textLength="4.1" lengthAdjust="spacingAndGlyphs" font-size="9" fill="#1c1c1c" stroke="#1c1c1c" stroke-width="0.28">1</text>
<text x="346.0" y="492.3" textLength="33.0" lengthAdjust="spacingAndGlyphs" font-size="9" fill="#1c1c1c" stroke="#1c1c1c" stroke-width="0.28">BROWN</text>
<text x="381.0" y="501.3" textLength="5.0" lengthAdjust="spacingAndGlyphs" font-size="9" fill="#1c1c1c" stroke="#1c1c1c" stroke-width="0.28">2</text>
<text x="358.0" y="516.3" textLength="18.0" lengthAdjust="spacingAndGlyphs" font-size="9" fill="#1c1c1c" stroke="#1c1c1c" stroke-width="0.28">RED</text>
<path d="M393 477 Q398 477 398 482 L398 488 Q398 491.5 402 491.5 Q398 491.5 398 495 L398 501 Q398 506 393 506" stroke="#1c1c1c" stroke-width="1" fill="none" stroke-linejoin="miter"/>
<text x="403.0" y="489.6" textLength="57.0" lengthAdjust="spacingAndGlyphs" font-size="9.8" fill="#1c1c1c" stroke="#1c1c1c" stroke-width="0.28">FILAMENT</text>
<text x="403.0" y="499.6" textLength="37.0" lengthAdjust="spacingAndGlyphs" font-size="9.8" fill="#1c1c1c" stroke="#1c1c1c" stroke-width="0.28">INPUT</text>
<text x="289.0" y="532.5" textLength="78.0" lengthAdjust="spacingAndGlyphs" font-size="9.5" fill="#1c1c1c" stroke="#1c1c1c" stroke-width="0.28" word-spacing="2">AK TO PEAK</text>
<text x="307.0" y="542.1" textLength="26.0" lengthAdjust="spacingAndGlyphs" font-size="9.7" fill="#1c1c1c" stroke="#1c1c1c" stroke-width="0.28">FROM</text>
<text x="289.0" y="553.6" textLength="43.0" lengthAdjust="spacingAndGlyphs" font-size="9.7" fill="#1c1c1c" stroke="#1c1c1c" stroke-width="0.28">P1150-4</text>
<rect x="338" y="547.84" width="53" height="1.32" fill="#1c1c1c"/>
<path d="M357 548.5 L344 545.0 L344 552.0 Z" fill="#1c1c1c"/>
<text x="378.0" y="543.5" textLength="6.0" lengthAdjust="spacingAndGlyphs" font-size="9.5" fill="#1c1c1c" stroke="#1c1c1c" stroke-width="0.28">3</text>
<text x="349.0" y="560.3" textLength="36.0" lengthAdjust="spacingAndGlyphs" font-size="9" fill="#1c1c1c" stroke="#1c1c1c" stroke-width="0.28">YELLOW</text>
<path d="M310.5 568 L320 558.5 L329.5 568 L320 577.5 Z" fill="none" stroke="#1c1c1c" stroke-width="1.1"/>
<text x="320" y="571.2" text-anchor="middle" font-size="9" fill="#1c1c1c">8</text>
<text x="395.0" y="551.6" textLength="52.0" lengthAdjust="spacingAndGlyphs" font-size="9.8" fill="#1c1c1c" stroke="#1c1c1c" stroke-width="0.28">HV MULT</text>
<text x="395.0" y="561.1" textLength="40.0" lengthAdjust="spacingAndGlyphs" font-size="9.8" fill="#1c1c1c" stroke="#1c1c1c" stroke-width="0.28">INPUT</text>
<text x="472.0" y="575.6" textLength="37.0" lengthAdjust="spacingAndGlyphs" font-size="9.7" fill="#1c1c1c" stroke="#1c1c1c" stroke-width="0.28">FOCUS</text>
<text x="464.0" y="585.1" textLength="45.0" lengthAdjust="spacingAndGlyphs" font-size="9.7" fill="#1c1c1c" stroke="#1c1c1c" stroke-width="0.28">OUTPUT</text>
<text x="427.0" y="596.4" textLength="33.0" lengthAdjust="spacingAndGlyphs" font-size="12" fill="#1c1c1c" stroke="#1c1c1c" stroke-width="0.28">U1240</text>
<text x="436.0" y="617.6" textLength="19.0" lengthAdjust="spacingAndGlyphs" font-size="9.7" fill="#1c1c1c" stroke="#1c1c1c" stroke-width="0.28">H V</text>
<text x="426.0" y="629.6" textLength="44.0" lengthAdjust="spacingAndGlyphs" font-size="9.7" fill="#1c1c1c" stroke="#1c1c1c" stroke-width="0.28">MODULE</text>
<text x="396.0" y="644.6" textLength="87.0" lengthAdjust="spacingAndGlyphs" font-size="9.8" fill="#1c1c1c" stroke="#1c1c1c" stroke-width="0.28">HV REGULATOR</text>
<text x="398.0" y="653.6" textLength="36.0" lengthAdjust="spacingAndGlyphs" font-size="9.8" fill="#1c1c1c" stroke="#1c1c1c" stroke-width="0.28">INPUT</text>
<text x="451.0" y="664.6" textLength="58.0" lengthAdjust="spacingAndGlyphs" font-size="9.7" fill="#1c1c1c" stroke="#1c1c1c" stroke-width="0.28">INTENSITY</text>
<text x="467.0" y="675.1" textLength="42.0" lengthAdjust="spacingAndGlyphs" font-size="9.7" fill="#1c1c1c" stroke="#1c1c1c" stroke-width="0.28">OUTPUT</text>
<text x="442.0" y="736.6" textLength="60.0" lengthAdjust="spacingAndGlyphs" font-size="9.7" fill="#1c1c1c" stroke="#1c1c1c" stroke-width="0.28">FILAMENT</text>
<text x="458.0" y="746.1" textLength="44.0" lengthAdjust="spacingAndGlyphs" font-size="9.7" fill="#1c1c1c" stroke="#1c1c1c" stroke-width="0.28">OUTPUT</text>
<path d="M512 727 Q507 727 507 732 L507 738 Q507 741 503.5 741 Q507 741 507 744 L507 750 Q507 755 512 755" stroke="#1c1c1c" stroke-width="1" fill="none" stroke-linejoin="miter"/>
<text x="396.0" y="749.6" textLength="17.0" lengthAdjust="spacingAndGlyphs" font-size="9.7" fill="#1c1c1c" stroke="#1c1c1c" stroke-width="0.28">H V</text>
<text x="395.0" y="759.6" textLength="36.0" lengthAdjust="spacingAndGlyphs" font-size="9.7" fill="#1c1c1c" stroke="#1c1c1c" stroke-width="0.28">SENSE</text>
<text x="396.0" y="769.1" textLength="22.0" lengthAdjust="spacingAndGlyphs" font-size="9.7" fill="#1c1c1c" stroke="#1c1c1c" stroke-width="0.28">OUT</text>
<rect x="289" y="559.05" width="18" height="2.90" fill="#1c1c1c"/>
<rect x="305.05" y="559" width="2.90" height="77" fill="#1c1c1c"/>
<rect x="305.05" y="651" width="2.90" height="85" fill="#1c1c1c"/>
<rect x="305.05" y="754" width="2.90" height="9" fill="#1c1c1c"/>
<rect x="305.05" y="781" width="2.90" height="55" fill="#1c1c1c"/>
<rect x="289" y="834.05" width="18" height="2.90" fill="#1c1c1c"/>
<rect x="312.84" y="626" width="1.32" height="14" fill="#1c1c1c"/>
<rect x="324.84" y="626" width="1.32" height="15" fill="#1c1c1c"/>
<rect x="313" y="625.84" width="13" height="1.32" fill="#1c1c1c"/>
<rect x="312.84" y="649" width="1.32" height="88" fill="#1c1c1c"/>
<rect x="324.84" y="648" width="1.32" height="95" fill="#1c1c1c"/>
<rect x="312.84" y="755" width="1.32" height="7" fill="#1c1c1c"/>
<rect x="324.84" y="753" width="1.32" height="15" fill="#1c1c1c"/>
<rect x="312.84" y="779" width="1.32" height="12" fill="#1c1c1c"/>
<rect x="324.84" y="776" width="1.32" height="15" fill="#1c1c1c"/>
<rect x="313" y="790.84" width="13" height="1.32" fill="#1c1c1c"/>
<text x="311.0" y="620.5" textLength="30.0" lengthAdjust="spacingAndGlyphs" font-size="9.5" fill="#1c1c1c" stroke="#1c1c1c" stroke-width="0.28">P1230</text>
<text x="316.0" y="639.4" textLength="5.5" lengthAdjust="spacingAndGlyphs" font-size="10.5" fill="#1c1c1c" stroke="#1c1c1c" stroke-width="0.28">4</text>
<text x="316.0" y="767.4" textLength="6.0" lengthAdjust="spacingAndGlyphs" font-size="10.5" fill="#1c1c1c" stroke="#1c1c1c" stroke-width="0.28">2</text>
<rect x="289" y="643.84" width="18" height="1.32" fill="#1c1c1c"/>
<path d="M306.5 639.5 L311.5 644.5 L306.5 649.5" stroke="#1c1c1c" stroke-width="1.1" fill="none" stroke-linejoin="miter"/>
<path d="M312.0 639.5 L317.0 644.5 L312.0 649.5" stroke="#1c1c1c" stroke-width="1.1" fill="none" stroke-linejoin="miter"/>
<rect x="317" y="643.84" width="74" height="1.32" fill="#1c1c1c"/>
<text x="378.0" y="640.7" textLength="8.5" lengthAdjust="spacingAndGlyphs" font-size="10" fill="#1c1c1c" stroke="#1c1c1c" stroke-width="0.28">11</text>
<text x="342.0" y="654.0" textLength="33.5" lengthAdjust="spacingAndGlyphs" font-size="9.5" fill="#1c1c1c" stroke="#1c1c1c" stroke-width="0.28">BLACK</text>
<path d="M289 598.5 L293.5 598.5 L299.5 610 L293.5 621.5 L289 621.5 Z" fill="#0a0a0a"/>
<text x="286.8" y="614.5" font-size="12.5" font-weight="bold" fill="#fff">9</text>
<rect x="280.5" y="646.5" width="22.5" height="8" rx="4" fill="none" stroke="#1c1c1c" stroke-width="1"/>
<text x="286.5" y="653.3" font-size="7.5" font-weight="bold" fill="#1c1c1c" textLength="14" lengthAdjust="spacingAndGlyphs">15V</text>
<text x="289.0" y="678.5" textLength="11.0" lengthAdjust="spacingAndGlyphs" font-size="9.5" fill="#1c1c1c" stroke="#1c1c1c" stroke-width="0.28">38</text>
<text x="288.0" y="687.0" textLength="8.1" lengthAdjust="spacingAndGlyphs" font-size="9.5" fill="#1c1c1c" stroke="#1c1c1c" stroke-width="0.28">11</text>
<path d="M302 738.5 L295 736 L295 741 Z" fill="#1c1c1c"/>
<path d="M315 738.5 L322 736 L322 741 Z" fill="#1c1c1c"/>
<rect x="289" y="747.84" width="18" height="1.32" fill="#1c1c1c"/>
<path d="M307 743.5 L312 748.5 L307 753.5" stroke="#1c1c1c" stroke-width="1.1" fill="none" stroke-linejoin="miter"/>
<path d="M312.5 743.5 L317.5 748.5 L312.5 753.5" stroke="#1c1c1c" stroke-width="1.1" fill="none" stroke-linejoin="miter"/>
<rect x="318" y="747.84" width="73" height="1.32" fill="#1c1c1c"/>
<text x="380.0" y="743.7" textLength="5.0" lengthAdjust="spacingAndGlyphs" font-size="10" fill="#1c1c1c" stroke="#1c1c1c" stroke-width="0.28">9</text>
<text x="339.0" y="758.5" textLength="35.0" lengthAdjust="spacingAndGlyphs" font-size="9.5" fill="#1c1c1c" stroke="#1c1c1c" stroke-width="0.28">GREEN</text>
<rect x="289" y="771.84" width="18" height="1.32" fill="#1c1c1c"/>
<path d="M307 767.5 L312 772.5 L307 777.5" stroke="#1c1c1c" stroke-width="1.1" fill="none" stroke-linejoin="miter"/>
<path d="M312.5 767.5 L317.5 772.5 L312.5 777.5" stroke="#1c1c1c" stroke-width="1.1" fill="none" stroke-linejoin="miter"/>
<rect x="318" y="771.84" width="73" height="1.32" fill="#1c1c1c"/>
<text x="378.0" y="768.7" textLength="10.0" lengthAdjust="spacingAndGlyphs" font-size="10" fill="#1c1c1c" stroke="#1c1c1c" stroke-width="0.28">12</text>
<text x="339.0" y="783.5" textLength="30.0" lengthAdjust="spacingAndGlyphs" font-size="9.5" fill="#1c1c1c" stroke="#1c1c1c" stroke-width="0.28">WHITE</text>
<text x="317.5" y="858.3" textLength="87.0" lengthAdjust="spacingAndGlyphs" font-size="10.2" fill="#1c1c1c" stroke="#1c1c1c" stroke-width="0.28">REV DEC 1983</text>
<circle cx="469" cy="820" r="2" fill="#bbb" stroke="#888" stroke-width="0.8"/>
<text x="549" y="846" textLength="118" lengthAdjust="spacingAndGlyphs" font-size="19" fill="#1c1c1c" stroke="#fff" stroke-width="0.42" word-spacing="3">CRT CIRCUIT</text>
<path d="M675.5 839 L686 828.5 L696.5 839 L686 849.5 Z" fill="none" stroke="#1c1c1c" stroke-width="1.1"/>
<text x="686" y="842.2" text-anchor="middle" font-size="9" fill="#1c1c1c">10</text>
<text x="844.0" y="754.0" textLength="159.0" lengthAdjust="spacingAndGlyphs" font-size="9.5" fill="#7a7a7a" stroke="#7a7a7a" stroke-width="0.28" font-weight="bold">SEE PARTS LIST FOR EARLIER</text>
<text x="844.0" y="764.1" textLength="159.0" lengthAdjust="spacingAndGlyphs" font-size="9.5" fill="#7a7a7a" stroke="#7a7a7a" stroke-width="0.28" font-weight="bold">VALUES AND SERIAL NUMBER</text>
<text x="844.0" y="774.2" textLength="160.0" lengthAdjust="spacingAndGlyphs" font-size="9.5" fill="#7a7a7a" stroke="#7a7a7a" stroke-width="0.28" font-weight="bold">RANGES OF PARTS OUTLINED</text>
<text x="844.0" y="784.3" textLength="124.0" lengthAdjust="spacingAndGlyphs" font-size="9.5" fill="#7a7a7a" stroke="#7a7a7a" stroke-width="0.28" font-weight="bold">OR DEPICTED IN GREY.</text>
<text transform="translate(1150,435) rotate(90)" x="0" y="0" textLength="77" lengthAdjust="spacingAndGlyphs" font-size="11.5" font-weight="bold" fill="#111">CRT CIRCUIT</text>
<path d="M1143.5 548 L1155 536.5 L1166.5 548 L1155 559.5 Z" fill="none" stroke="#111" stroke-width="2"/>
<text transform="translate(1151.5,548) rotate(90)" x="0" y="0" text-anchor="middle" font-size="9.5" font-weight="bold" fill="#111">10</text>
<path d="M1169 611 Q1174 606 1176 600 L1177 604 Q1174 609 1169 611Z" fill="#cfcfcf"/>
</g></svg>
<div id="toolshadow" class="abs"></div>
<!--TASK-->
<div id="task" class="abs">
<div class="tb abs" style="left:258px;width:157px;padding-left:29px;letter-spacing:-0.15px">Mess- und Prüfgerä...</div>
<div class="tb act abs" style="left:418px;width:158px;padding-left:30px;letter-spacing:-0.4px">Tek_305_DMM_Osci...</div>
<div class="tb abs" style="left:579px;width:157px;padding-left:28px">Unbenannt - Paint</div>
<div class="abs" style="left:1233px;top:4px;color:#fff;font-size:11px;line-height:17px">DE</div>
<div class="abs" style="left:1400px;top:6px;color:#fff;font-size:11px;line-height:17px">16:53</div>
</div>
<svg width="1440" height="900" viewBox="0 0 1440 900" style="font-family:'Liberation Sans',sans-serif">
<defs>
<linearGradient id="gBlueArrow" x1="0" y1="0" x2="0" y2="1"><stop offset="0" stop-color="#7cc0f0"/><stop offset="1" stop-color="#2f74b8"/></linearGradient>
<linearGradient id="gZoom" x1="0" y1="0" x2="0" y2="1"><stop offset="0" stop-color="#cfe6fb"/><stop offset="1" stop-color="#7fb0e4"/></linearGradient>
<linearGradient id="gFit" x1="0" y1="0" x2="0" y2="1"><stop offset="0" stop-color="#eaf4fe"/><stop offset="1" stop-color="#a8cdf2"/></linearGradient>
<linearGradient id="gBtn" x1="0" y1="0" x2="0" y2="1"><stop offset="0" stop-color="#9aa3b0"/><stop offset="0.48" stop-color="#6f7a8b"/><stop offset="0.5" stop-color="#1b2942"/><stop offset="1" stop-color="#2a3a58"/></linearGradient>
<linearGradient id="gClose" x1="0" y1="0" x2="0" y2="1"><stop offset="0" stop-color="#dba59c"/><stop offset="0.48" stop-color="#cc7a6c"/><stop offset="0.5" stop-color="#b8321a"/><stop offset="1" stop-color="#d0573c"/></linearGradient>
<radialGradient id="gOrb" cx="0.5" cy="0.35" r="0.7"><stop offset="0" stop-color="#8fd0f0"/><stop offset="0.45" stop-color="#2f86c8"/><stop offset="1" stop-color="#0b2f66"/></radialGradient>
<radialGradient id="gGlobe" cx="0.35" cy="0.3" r="0.8"><stop offset="0" stop-color="#9ccbf2"/><stop offset="1" stop-color="#2a62a8"/></radialGradient>
<radialGradient id="gFox" cx="0.5" cy="0.4" r="0.6"><stop offset="0" stop-color="#ffb640"/><stop offset="1" stop-color="#d95a10"/></radialGradient>
<linearGradient id="gPrinter" x1="0" y1="0" x2="0" y2="1"><stop offset="0" stop-color="#8a8f94"/><stop offset="1" stop-color="#5c6166"/></linearGradient>
</defs>
<rect x="1343.5" y="-3.5" width="94" height="20" rx="4" fill="none" stroke="#b4bfcd" stroke-width="1"/>
<rect x="1345" y="0" width="24.5" height="15" fill="url(#gBtn)"/>
<rect x="1370.5" y="0" width="23" height="15" fill="url(#gBtn)"/>
<rect x="1394.5" y="0" width="42" height="15" fill="url(#gClose)"/>
<path d="M1344.5 0 V12 Q1344.5 15.5 1348 15.5 H1433 Q1436.5 15.5 1436.5 12 V0 M1370 0 V15 M1394 0 V15" fill="none" stroke="#c5ced9" stroke-width="1"/>
<rect x="1352" y="8" width="10.5" height="3" fill="#f4f6fa" stroke="#3a4658" stroke-width="0.6"/>
<path d="M1379 2.5 H1386.5 V9.5" fill="none" stroke="#eef1f6" stroke-width="1.6"/><rect x="1376.6" y="4.6" width="7" height="7" fill="none" stroke="#f4f6fa" stroke-width="2"/>
<path d="M1411 3.5 L1420.5 11 M1420.5 3.5 L1411 11" stroke="#4a2a2a" stroke-width="4" stroke-linecap="butt"/><path d="M1411 3.5 L1420.5 11 M1420.5 3.5 L1411 11" stroke="#fff" stroke-width="2.6"/>
<path d="M1426.5 26.5 L1432.5 32.5 M1432.5 26.5 L1426.5 32.5" stroke="#000" stroke-width="2.2"/>
<rect x="4.5" y="2.5" width="10" height="14" fill="#fff" stroke="#ddd" stroke-width="0.5"/><rect x="0" y="4" width="9" height="3.2" fill="#d81e1e"/><path d="M6 14 Q8 10 9 7 Q10 11 13 12.5 Q9 12 6 14Z" fill="none" stroke="#d03a3a" stroke-width="0.9"/>
<rect x="20" y="48" width="13" height="7" fill="#f2f5f7" stroke="#a8adb2" stroke-width="0.8"/>
<rect x="16.5" y="53.500" width="20.500" height="11" rx="1.500" fill="url(#gPrinter)" stroke="#54595e" stroke-width="0.8"/>
<rect x="19" y="56.500" width="15.500" height="1.800" fill="#3e4246"/>
<rect x="20.5" y="60.500" width="12.500" height="9" fill="#f6f8fa" stroke="#8e9398" stroke-width="0.8"/><path d="M22.500 63.500 H31 M22.500 65.500 H31 M22.500 67.500 H31" stroke="#b8c2cc" stroke-width="0.8"/>
<path d="M59.5 47.500 H69 L73 51.500 V64 H59.500Z" fill="#eef4fb" stroke="#9db4cf" stroke-width="0.8"/><path d="M69 47.500 V51.500 H73" fill="#cfdcec" stroke="#9db4cf" stroke-width="0.7"/>
<path d="M52 65 Q52 59.500 57.500 59.500 Q62 59.500 62 65Z" fill="#c8306a"/><circle cx="57.800" cy="56" r="3.100" fill="#f2b27a" stroke="#c98448" stroke-width="0.6"/>
<path d="M58 69 Q58 63.500 64 63.500 Q70 63.500 70 69Z" fill="#2d78c4"/><circle cx="64.200" cy="60.200" r="3.100" fill="#f4ba84" stroke="#c98448" stroke-width="0.6"/>
<path d="M79 57.500 H84.500 L81.750 60.500Z" fill="#111"/>
<path d="M113.500 48 H124.500 L128.500 52 V64 H113.500Z" fill="#f1f3f5" stroke="#8a9096" stroke-width="0.8"/><rect x="115" y="50" width="8" height="2.500" fill="#70767c"/>
<circle cx="111" cy="55" r="7" fill="url(#gGlobe)" stroke="#2f5f9a" stroke-width="0.7"/><path d="M106 52 Q109 49 112 51 Q110 54 112 57 Q108 58 106 52Z" fill="#bfe0f8" opacity="0.7"/>
<polygon points="122.1,64.0 120.1,65.5 120.5,68.0 118.0,67.6 116.5,69.6 115.0,67.6 112.5,68.0 112.9,65.5 110.9,64.0 112.9,62.5 112.5,60.0 115.0,60.4 116.5,58.4 118.0,60.4 120.5,60.0 120.1,62.5" fill="#f29a14" stroke="#c8740a" stroke-width="0.5"/>
<path d="M161.500 50 L171.500 60 H166.500 V67.500 H156.500 V60 H151.500Z" fill="url(#gBlueArrow)" stroke="#2d6cae" stroke-width="0.9"/>
<path d="M191.500 69 L201.500 58.500 H196.500 V51 H186.500 V58.500 H181.500Z" fill="url(#gBlueArrow)" stroke="#2d6cae" stroke-width="0.9"/>
<circle cx="295" cy="58" r="6.800" fill="url(#gZoom)" stroke="#86b0dc" stroke-width="1.300"/><circle cx="295" cy="58" r="4.300" fill="#8fbbe8" stroke="#5d93cf" stroke-width="0.6"/>
<path d="M292.4 58 H297.6" stroke="#1f5aa6" stroke-width="1.700"/>
<circle cx="320" cy="58" r="6.800" fill="url(#gZoom)" stroke="#86b0dc" stroke-width="1.300"/><circle cx="320" cy="58" r="4.300" fill="#8fbbe8" stroke="#5d93cf" stroke-width="0.6"/>
<path d="M317.4 58 H322.6" stroke="#1f5aa6" stroke-width="1.700"/>
<path d="M320 55.400 V60.600" stroke="#1f5aa6" stroke-width="1.700"/>
<path d="M385 58 H390.500 L387.750 61Z" fill="#111"/>
<path d="M609 58 H614.500 L611.750 61Z" fill="#111"/>
<rect x="417.500" y="49.500" width="14.500" height="8" fill="url(#gFit)" stroke="#5a93cf" stroke-width="1"/><rect x="417.500" y="59.500" width="14.500" height="9" fill="url(#gFit)" stroke="#3f7fc4" stroke-width="1"/>
<path d="M420 64 H430 M422 62 L420 64 L422 66 M428 62 L430 64 L428 66" stroke="#2f6fb4" stroke-width="1" fill="none"/>
<rect x="453.500" y="49.500" width="14.500" height="18.500" fill="url(#gFit)" stroke="#3f7fc4" stroke-width="1.200"/>
<path d="M460.750 51.500 V56 M459 53 L460.750 51.200 L462.500 53 M460.750 66.500 V62 M459 65 L460.750 66.800 L462.500 65 M455.500 59 H459 M457 57.300 L455.300 59 L457 60.700 M466 59 H462.500 M464.500 57.300 L466.200 59 L464.500 60.700" stroke="#3a7abf" stroke-width="0.9" fill="none"/>
<path d="M10.500 96 H20 L24 100 V114 H10.500Z" fill="#8e8e8e"/><path d="M13.500 92.500 H23 L27 96.500 V110.500 H13.500Z" fill="#c9c9c9" stroke="#9a9a9a" stroke-width="0.6"/><path d="M15.500 99 H25 M15.500 101.500 H25 M15.500 104 H25 M15.500 106.500 H25" stroke="#9c9c9c" stroke-width="0.8"/>
<path d="M11 795 H19 Q22 795 22 798 V802 Q22 805 19 805 H15 L13 808 L13 805 H11 Q8 805 8 802 V798 Q8 795 11 795Z" fill="#b8952a"/>
<path d="M20 799 H28 Q31 799 31 802 V806 Q31 809 28 809 H23 L20.500 812.500 L20.500 809 H20 Q17 809 17 806 V802 Q17 799 20 799Z" fill="#d2ac36" stroke="#8a6d18" stroke-width="0.6"/><path d="M20 803 H28 M20 805.500 H28" stroke="#7f6516" stroke-width="0.9"/>
<path d="M23 844 L14.500 852.500 Q12 855.500 14.500 857.500 Q17 859 19.500 856.500 L28.500 847 Q31.500 843 28.500 840.500 Q25.500 838 22 841.500 L12 851.500 Q8.500 855.500 11.500 858.500" fill="none" stroke="#a6a6a6" stroke-width="1.500" transform="translate(-1,-3)"/>
<path d="M1428.500 89.500 L1432.500 85 L1436.500 89.500Z" fill="#3a3a3a"/><path d="M1428.500 858.500 L1432.500 863 L1436.500 858.500Z" fill="#3a3a3a"/>
<linearGradient id="gThumb" x1="0" y1="0" x2="1" y2="0"><stop offset="0" stop-color="#fafafa"/><stop offset="0.45" stop-color="#ececec"/><stop offset="1" stop-color="#c4c4c4"/></linearGradient><rect x="1424.500" y="530.500" width="14" height="14.500" rx="1.500" fill="url(#gThumb)" stroke="#9c9c9c" stroke-width="1"/>
<rect x="64" y="875" width="1.300" height="1.300" fill="#85888c"/><rect x="65" y="876" width="1.300" height="1.300" fill="#000"/>
<rect x="67" y="875" width="1.300" height="1.300" fill="#85888c"/><rect x="68" y="876" width="1.300" height="1.300" fill="#000"/>
<rect x="70" y="875" width="1.300" height="1.300" fill="#85888c"/><rect x="71" y="876" width="1.300" height="1.300" fill="#000"/>
<rect x="64" y="879" width="1.300" height="1.300" fill="#85888c"/><rect x="65" y="880" width="1.300" height="1.300" fill="#000"/>
<rect x="67" y="879" width="1.300" height="1.300" fill="#85888c"/><rect x="68" y="880" width="1.300" height="1.300" fill="#000"/>
<rect x="70" y="879" width="1.300" height="1.300" fill="#85888c"/><rect x="71" y="880" width="1.300" height="1.300" fill="#000"/>
<rect x="64" y="883" width="1.300" height="1.300" fill="#85888c"/><rect x="65" y="884" width="1.300" height="1.300" fill="#000"/>
<rect x="67" y="883" width="1.300" height="1.300" fill="#85888c"/><rect x="68" y="884" width="1.300" height="1.300" fill="#000"/>
<rect x="70" y="883" width="1.300" height="1.300" fill="#85888c"/><rect x="71" y="884" width="1.300" height="1.300" fill="#000"/>
<rect x="64" y="887" width="1.300" height="1.300" fill="#85888c"/><rect x="65" y="888" width="1.300" height="1.300" fill="#000"/>
<rect x="67" y="887" width="1.300" height="1.300" fill="#85888c"/><rect x="68" y="888" width="1.300" height="1.300" fill="#000"/>
<rect x="70" y="887" width="1.300" height="1.300" fill="#85888c"/><rect x="71" y="888" width="1.300" height="1.300" fill="#000"/>
<rect x="64" y="891" width="1.300" height="1.300" fill="#85888c"/><rect x="65" y="892" width="1.300" height="1.300" fill="#000"/>
<rect x="67" y="891" width="1.300" height="1.300" fill="#85888c"/><rect x="68" y="892" width="1.300" height="1.300" fill="#000"/>
<rect x="70" y="891" width="1.300" height="1.300" fill="#85888c"/><rect x="71" y="892" width="1.300" height="1.300" fill="#000"/>
<rect x="64" y="895" width="1.300" height="1.300" fill="#85888c"/><rect x="65" y="896" width="1.300" height="1.300" fill="#000"/>
<rect x="67" y="895" width="1.300" height="1.300" fill="#85888c"/><rect x="68" y="896" width="1.300" height="1.300" fill="#000"/>
<rect x="70" y="895" width="1.300" height="1.300" fill="#85888c"/><rect x="71" y="896" width="1.300" height="1.300" fill="#000"/>
<rect x="243" y="875" width="1.300" height="1.300" fill="#85888c"/><rect x="244" y="876" width="1.300" height="1.300" fill="#000"/>
<rect x="246" y="875" width="1.300" height="1.300" fill="#85888c"/><rect x="247" y="876" width="1.300" height="1.300" fill="#000"/>
<rect x="249" y="875" width="1.300" height="1.300" fill="#85888c"/><rect x="250" y="876" width="1.300" height="1.300" fill="#000"/>
<rect x="243" y="879" width="1.300" height="1.300" fill="#85888c"/><rect x="244" y="880" width="1.300" height="1.300" fill="#000"/>
<rect x="246" y="879" width="1.300" height="1.300" fill="#85888c"/><rect x="247" y="880" width="1.300" height="1.300" fill="#000"/>
<rect x="249" y="879" width="1.300" height="1.300" fill="#85888c"/><rect x="250" y="880" width="1.300" height="1.300" fill="#000"/>
<rect x="243" y="883" width="1.300" height="1.300" fill="#85888c"/><rect x="244" y="884" width="1.300" height="1.300" fill="#000"/>
<rect x="246" y="883" width="1.300" height="1.300" fill="#85888c"/><rect x="247" y="884" width="1.300" height="1.300" fill="#000"/>
<rect x="249" y="883" width="1.300" height="1.300" fill="#85888c"/><rect x="250" y="884" width="1.300" height="1.300" fill="#000"/>
<rect x="243" y="887" width="1.300" height="1.300" fill="#85888c"/><rect x="244" y="888" width="1.300" height="1.300" fill="#000"/>
<rect x="246" y="887" width="1.300" height="1.300" fill="#85888c"/><rect x="247" y="888" width="1.300" height="1.300" fill="#000"/>
<rect x="249" y="887" width="1.300" height="1.300" fill="#85888c"/><rect x="250" y="888" width="1.300" height="1.300" fill="#000"/>
<rect x="243" y="891" width="1.300" height="1.300" fill="#85888c"/><rect x="244" y="892" width="1.300" height="1.300" fill="#000"/>
<rect x="246" y="891" width="1.300" height="1.300" fill="#85888c"/><rect x="247" y="892" width="1.300" height="1.300" fill="#000"/>
<rect x="249" y="891" width="1.300" height="1.300" fill="#85888c"/><rect x="250" y="892" width="1.300" height="1.300" fill="#000"/>
<rect x="243" y="895" width="1.300" height="1.300" fill="#85888c"/><rect x="244" y="896" width="1.300" height="1.300" fill="#000"/>
<rect x="246" y="895" width="1.300" height="1.300" fill="#85888c"/><rect x="247" y="896" width="1.300" height="1.300" fill="#000"/>
<rect x="249" y="895" width="1.300" height="1.300" fill="#85888c"/><rect x="250" y="896" width="1.300" height="1.300" fill="#000"/>
<rect x="1215" y="875" width="1.300" height="1.300" fill="#85888c"/><rect x="1216" y="876" width="1.300" height="1.300" fill="#000"/>
<rect x="1218" y="875" width="1.300" height="1.300" fill="#85888c"/><rect x="1219" y="876" width="1.300" height="1.300" fill="#000"/>
<rect x="1221" y="875" width="1.300" height="1.300" fill="#85888c"/><rect x="1222" y="876" width="1.300" height="1.300" fill="#000"/>
<rect x="1215" y="879" width="1.300" height="1.300" fill="#85888c"/><rect x="1216" y="880" width="1.300" height="1.300" fill="#000"/>
<rect x="1218" y="879" width="1.300" height="1.300" fill="#85888c"/><rect x="1219" y="880" width="1.300" height="1.300" fill="#000"/>
<rect x="1221" y="879" width="1.300" height="1.300" fill="#85888c"/><rect x="1222" y="880" width="1.300" height="1.300" fill="#000"/>
<rect x="1215" y="883" width="1.300" height="1.300" fill="#85888c"/><rect x="1216" y="884" width="1.300" height="1.300" fill="#000"/>
<rect x="1218" y="883" width="1.300" height="1.300" fill="#85888c"/><rect x="1219" y="884" width="1.300" height="1.300" fill="#000"/>
<rect x="1221" y="883" width="1.300" height="1.300" fill="#85888c"/><rect x="1222" y="884" width="1.300" height="1.300" fill="#000"/>
<rect x="1215" y="887" width="1.300" height="1.300" fill="#85888c"/><rect x="1216" y="888" width="1.300" height="1.300" fill="#000"/>
<rect x="1218" y="887" width="1.300" height="1.300" fill="#85888c"/><rect x="1219" y="888" width="1.300" height="1.300" fill="#000"/>
<rect x="1221" y="887" width="1.300" height="1.300" fill="#85888c"/><rect x="1222" y="888" width="1.300" height="1.300" fill="#000"/>
<rect x="1215" y="891" width="1.300" height="1.300" fill="#85888c"/><rect x="1216" y="892" width="1.300" height="1.300" fill="#000"/>
<rect x="1218" y="891" width="1.300" height="1.300" fill="#85888c"/><rect x="1219" y="892" width="1.300" height="1.300" fill="#000"/>
<rect x="1221" y="891" width="1.300" height="1.300" fill="#85888c"/><rect x="1222" y="892" width="1.300" height="1.300" fill="#000"/>
<rect x="1215" y="895" width="1.300" height="1.300" fill="#85888c"/><rect x="1216" y="896" width="1.300" height="1.300" fill="#000"/>
<rect x="1218" y="895" width="1.300" height="1.300" fill="#85888c"/><rect x="1219" y="896" width="1.300" height="1.300" fill="#000"/>
<rect x="1221" y="895" width="1.300" height="1.300" fill="#85888c"/><rect x="1222" y="896" width="1.300" height="1.300" fill="#000"/>
<circle cx="30" cy="887" r="20" fill="#10203a" opacity="0.75"/><circle cx="30" cy="887" r="18" fill="url(#gOrb)" stroke="#8ab8d8" stroke-width="1"/>
<path d="M20.500 878.500 Q25 876 29.500 878.500 L28 885.500 Q23.500 883 19 885.500Z" fill="#e8542a"/><path d="M31 879 Q35.500 881.500 40 879 L38.500 886 Q34 888.500 29.500 886Z" fill="#86c640"/><path d="M18.500 887.500 Q23 885 27.500 887.500 L26 894.500 Q21.500 892 17 894.500Z" fill="#3a96e0"/><path d="M29 888 Q33.500 890.500 38 888 L36.500 895 Q32 897.500 27.500 895Z" fill="#f4c02a"/>
<rect x="81.500" y="879.500" width="15" height="12" fill="#3f7fd0" stroke="#dfe6ee" stroke-width="1.100"/><rect x="82.500" y="888" width="13" height="2.500" fill="#2b4f7a"/><rect x="82.500" y="880.500" width="13" height="4" fill="#5c9be0"/>
<circle cx="112.500" cy="884.500" r="7.300" fill="#e8c820"/><path d="M112.500 884.500 L106.200 880.800 A7.300 7.300 0 0 1 118.800 880.800Z" fill="#d8382c"/><path d="M112.500 884.500 L106.200 880.800 A7.300 7.300 0 0 0 112.500 891.800Z" fill="#3aa84a"/><circle cx="112.500" cy="884.500" r="3.300" fill="#fff"/><circle cx="112.500" cy="884.500" r="2.500" fill="#3a7ad8"/>
<circle cx="135.500" cy="885" r="6.300" fill="none" stroke="#2f9ae0" stroke-width="3"/><rect x="131" y="884" width="11" height="2.200" fill="#2f9ae0"/><rect x="137" y="886.200" width="6" height="3" fill="#0b0c0e" opacity="0"/><ellipse cx="135.500" cy="884.500" rx="9" ry="3.600" fill="none" stroke="#e8b420" stroke-width="1.300" transform="rotate(-32 135.500 884.500)"/>
<circle cx="158" cy="884.5" r="7.6" fill="url(#gFox)"/><circle cx="159.0" cy="882.9" r="5.0" fill="#2a5cc0"/><circle cx="158.2" cy="881.7" r="2.1" fill="#6aa8ee" opacity="0.8"/><path d="M150.4 884.5 Q156.48 886.02 161.8 882.98 Q160.28 891.34 153.44 890.2Z" fill="#f08a1c"/><path d="M157.5 877.66 q2 1 1.500 3 q-1.500 0.500 -2 2" stroke="#9ad0f8" stroke-width="1" fill="none"/>
<rect x="173.500" y="877.500" width="15" height="15" fill="#2f8ad0" stroke="#6fc0f0" stroke-width="1"/><circle cx="181" cy="885" r="5.300" fill="#f08a1c"/><path d="M179.300 882 L184 885 L179.300 888Z" fill="#fff"/>
<rect x="196.500" y="879.500" width="15" height="12" fill="#1c3f8a" stroke="#c8d4e8" stroke-width="1"/><rect x="198.500" y="881.500" width="6" height="4" fill="#fff"/><rect x="201.500" y="884" width="6" height="4" fill="#dfe8f4" stroke="#1c3f8a" stroke-width="0.5"/><rect x="204.500" y="886.500" width="5.500" height="3.500" fill="#fff" stroke="#1c3f8a" stroke-width="0.5"/>
<circle cx="274.5" cy="884.5" r="7.4" fill="url(#gFox)"/><circle cx="275.5" cy="882.9" r="4.9" fill="#2a5cc0"/><circle cx="274.7" cy="881.7" r="2.1" fill="#6aa8ee" opacity="0.8"/><path d="M267.1 884.5 Q273.02 885.98 278.2 883.02 Q276.72 891.16 270.06 890.05Z" fill="#f08a1c"/><path d="M274.0 877.84 q2 1 1.500 3 q-1.500 0.500 -2 2" stroke="#9ad0f8" stroke-width="1" fill="none"/>
<rect x="431.500" y="877.500" width="11" height="14.500" fill="#fff" stroke="#ccc" stroke-width="0.5"/><rect x="428" y="879" width="9" height="3.200" fill="#d81e1e"/><path d="M433.500 889.500 Q435.500 886 436.500 882.500 Q437.500 887 440.500 888.500 Q436.500 888 433.500 889.500Z" fill="none" stroke="#d03a3a" stroke-width="0.9"/>
<path d="M590.500 879 L594 886 M597.500 877.500 L595.500 886 M601 880 L597 886" stroke="#e8b048" stroke-width="1.600"/><rect x="592.500" y="885" width="6" height="7" fill="#c03028" stroke="#f0d8d0" stroke-width="0.6"/><circle cx="590.500" cy="878.500" r="1.300" fill="#f0e0a0"/><circle cx="597.500" cy="877.500" r="1.300" fill="#f0a030"/>
<path d="M1269.500 880.500 L1264.500 885 L1269.500 889.500" fill="none" stroke="#f0f0f0" stroke-width="2.200"/>
<rect x="1277.500" y="876.500" width="15" height="14" rx="1.500" fill="#e87a1c" stroke="#f4a860" stroke-width="0.8"/><path d="M1281 888 H1289.500 M1282 885.800 H1288.500 M1285.500 878.500 q-2 2 0 3 q1.500 1 0 2.500" stroke="#fff" stroke-width="1.100" fill="none"/>
<circle cx="1302.500" cy="878.800" r="2.600" fill="#9ac8f0"/><path d="M1298 890.500 Q1298 882 1302.500 882 Q1307 882 1307 890.500Z" fill="#8abcea"/><rect x="1304.500" y="884.500" width="6.500" height="6.500" rx="1" fill="#38c038" stroke="#1c8a1c" stroke-width="0.6"/>
<rect x="1313.500" y="875.500" width="15.500" height="15" fill="#d0141c"/><path d="M1316 888 Q1315.500 879 1321.500 878.500 Q1327 879 1327 886 M1321 880 L1324.500 888.500 Q1326 889.500 1327 888" fill="none" stroke="#fff" stroke-width="1.600"/>
<rect x="1349.500" y="877.500" width="6.500" height="12" fill="#3a3a3a" stroke="#aaa" stroke-width="0.8"/><path d="M1343.500 876.500 V879.500 M1347.500 876.500 V879.500" stroke="#e8d8a0" stroke-width="1.200"/><path d="M1342.500 879.500 H1348.500 V883 Q1348.500 885 1346 885.500 V890 H1345 V885.500 Q1342.500 885 1342.500 883Z" fill="#f4f4f4"/><path d="M1349.500 884 L1355.500 890 M1355.500 884 L1349.500 890" stroke="#e02020" stroke-width="1.800"/>
<rect x="1364.500" y="876.500" width="9" height="7" fill="#2a6ac8" stroke="#e8f0fa" stroke-width="1"/><rect x="1360.500" y="880.500" width="9" height="7" fill="#3a7ad8" stroke="#e8f0fa" stroke-width="1"/><path d="M1363 890 H1367 M1365 888 V890" stroke="#e8f0fa" stroke-width="1"/><circle cx="1371.500" cy="887.500" r="3.600" fill="#2f8ad8"/><path d="M1369.500 886 q2 -1.500 3 0.500 q1 2 -1 3" fill="#48c048"/>
<path d="M1378.500 880.500 H1381 L1385 876.500 V890 L1381 886 H1378.500Z" fill="#f0f0f0" stroke="#bbb" stroke-width="0.5"/><path d="M1387 880.500 Q1389 883.500 1387 886.500 M1389.500 878.500 Q1392.500 883.500 1389.500 888.500" fill="none" stroke="#58c058" stroke-width="1.200"/>
</svg>
</body></html>
